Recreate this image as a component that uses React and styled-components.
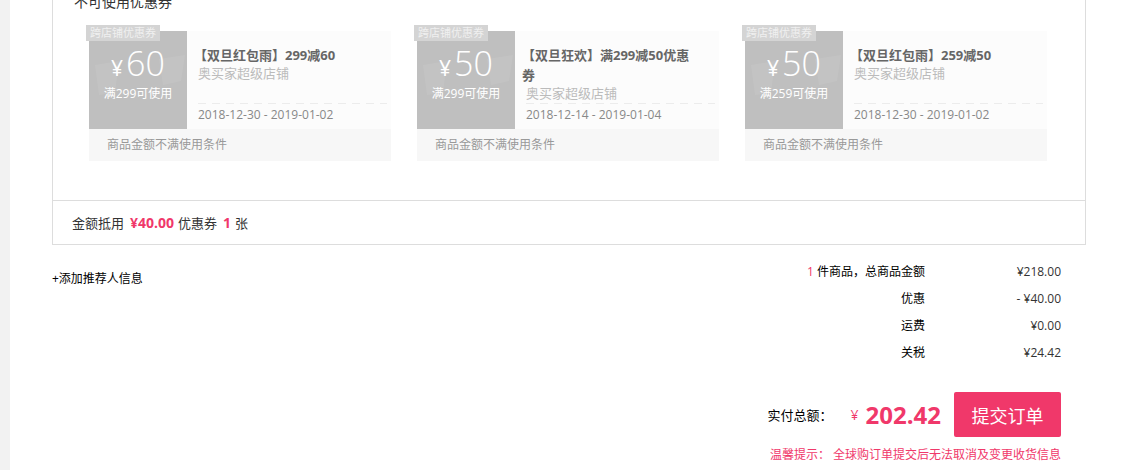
import styled, { createGlobalStyle } from 'styled-components';

const PINK = '#f0386a';

const coupons = [
  { value: '60', limit: '满299可使用', title: '【双旦红包雨】299减60', date: '2018-12-30 - 2019-01-02' },
  { value: '50', limit: '满299可使用', title: '【双旦狂欢】满299减50优惠券', date: '2018-12-14 - 2019-01-04' },
  { value: '50', limit: '满259可使用', title: '【双旦红包雨】259减50', date: '2018-12-30 - 2019-01-02' },
];

const summary = [
  { label: '件商品，总商品金额', count: 1, value: '¥218.00' },
  { label: '优惠', value: '- ¥40.00' },
  { label: '运费', value: '¥0.00' },
  { label: '关税', value: '¥24.42' },
];

const App = () => {
  return (
    <>
      <GlobalStyle />
      <Page>
        <SideStrip />
        <Main>
          <Panel>
            <CouponSection>
              <SectionTitle>不可使用优惠券</SectionTitle>
              <CouponList>
                {coupons.map((c, i) => (
                  <Coupon key={i} {...c} />
                ))}
              </CouponList>
            </CouponSection>
            <AmountRow>
              金额抵用<Strong>¥40.00</Strong>优惠券<Strong>1</Strong>张
            </AmountRow>
          </Panel>
          <Bottom>
            <AddReferrer>+添加推荐人信息</AddReferrer>
            <Summary>
              <SummaryGrid>
                {summary.map((row) => (
                  <SummaryRow key={row.label}>
                    <SummaryLabel>
                      {row.count && <Count>{row.count} </Count>}
                      {row.label}
                    </SummaryLabel>
                    <SummaryValue>{row.value}</SummaryValue>
                  </SummaryRow>
                ))}
              </SummaryGrid>
              <TotalRow>
                <TotalLabel>实付总额：</TotalLabel>
                <Yen>¥</Yen>
                <TotalValue>202.42</TotalValue>
                <SubmitButton>提交订单</SubmitButton>
              </TotalRow>
              <Tip>温馨提示： 全球购订单提交后无法取消及变更收货信息</Tip>
            </Summary>
          </Bottom>
        </Main>
      </Page>
    </>
  );
};

export default App;

function Coupon({ value, limit, title, date }) {
  return (
    <Card>
      <CardBody>
        <Face>
          <Watermark viewBox="0 0 98 98">
            <path d="M6 34 L30 30 L26 62 L10 64 Z" />
            <path d="M70 28 L96 24 L92 50 L74 54 Z" />
          </Watermark>
          <PriceRow>
            <PriceSign>¥</PriceSign>
            <PriceNum>{value}</PriceNum>
          </PriceRow>
          <Limit>{limit}</Limit>
        </Face>
        <Info>
          <CouponTitle>{title}</CouponTitle>
          <Shop>奥买家超级店铺</Shop>
          <DateBlock>{date}</DateBlock>
        </Info>
      </CardBody>
      <CardFooter>商品金额不满使用条件</CardFooter>
      <Tag>跨店铺优惠券</Tag>
    </Card>
  );
}

const GlobalStyle = createGlobalStyle`
  html, body {
    margin: 0;
    padding: 0;
    background: #fff;
  }
  body {
    font-family: "Open Sans", "Noto Sans CJK SC", "Noto Sans", sans-serif;
    overflow: hidden;
  }
  * { box-sizing: border-box; }
`;

const Page = styled.div`
  display: flex;
  height: 470px;
  overflow: hidden;
`;

const SideStrip = styled.div`
  width: 10px;
  flex-shrink: 0;
  background: #f2f2f2;
`;

const Main = styled.div`
  padding-left: 42px;
  width: 1076px;
`;

const Panel = styled.div`
  width: 1034px;
  margin-top: -8px;
  border: 1px solid #ddd;
  border-top: none;
`;

const CouponSection = styled.div`
  padding: 0 0 39px 36px;
`;

const SectionTitle = styled.div`
  margin-left: -15px;
  font-size: 14px;
  line-height: 20px;
  color: #333;
`;

const CouponList = styled.div`
  display: flex;
  gap: 26px;
  margin-top: 19px;
`;

const Card = styled.div`
  position: relative;
  width: 302px;
`;

const CardBody = styled.div`
  display: flex;
  height: 98px;
`;

const Face = styled.div`
  position: relative;
  width: 98px;
  flex-shrink: 0;
  background: #bfbfbf;
  color: #fff;
  display: flex;
  flex-direction: column;
  align-items: center;
  padding-top: 15px;
  overflow: hidden;
`;

const Watermark = styled.svg`
  position: absolute;
  inset: 0;
  width: 98px;
  height: 98px;
  fill: rgba(255, 255, 255, 0.07);
`;

const PriceRow = styled.div`
  position: relative;
  display: flex;
  align-items: baseline;
  height: 34px;
  line-height: 34px;
`;

const PriceSign = styled.span`
  font-size: 21px;
  margin-right: 3px;
`;

const PriceNum = styled.span`
  font-weight: 300;
  font-size: 34px;
`;

const Limit = styled.div`
  position: relative;
  margin-top: 6px;
  font-size: 12px;
  line-height: 16px;
`;

const Info = styled.div`
  flex: 1;
  background: #fcfcfc;
  padding: 14px 20px 0 11px;
  display: flex;
  flex-direction: column;
`;

const CouponTitle = styled.div`
  margin-left: -4px;
  font-size: 13px;
  font-weight: bold;
  line-height: 20px;
  color: #666;
`;

const Shop = styled.div`
  font-size: 13px;
  line-height: 17px;
  color: #bbb;
`;

const DateBlock = styled.div`
  margin: auto -16px 0 0;
  padding: 3px 0 5px;
  font-size: 12px;
  line-height: 18px;
  color: #888;
  background: repeating-linear-gradient(to right, #ececec 0 8px, transparent 8px 14px) top left / 100% 1px no-repeat;
`;

const CardFooter = styled.div`
  height: 32px;
  padding-left: 18px;
  background: #f7f7f7;
  font-size: 12px;
  line-height: 32px;
  color: #999;
`;

const Tag = styled.div`
  position: absolute;
  left: -3px;
  top: -6px;
  height: 16px;
  padding: 0 4px;
  background: #d4d4d4;
  color: #f0f0f0;
  font-size: 11px;
  line-height: 16px;
`;

const AmountRow = styled.div`
  display: flex;
  align-items: center;
  height: 44px;
  padding-left: 19px;
  border-top: 1px solid #ddd;
  font-size: 13px;
  color: #333;
`;

const Strong = styled.b`
  margin: 0 4px 0 6px;
  color: ${PINK};
  font-size: 14px;
`;

const Bottom = styled.div`
  display: flex;
  justify-content: space-between;
  width: 1034px;
  padding-right: 25px;
`;

const AddReferrer = styled.div`
  margin-top: 24px;
  font-size: 12px;
  line-height: 20px;
  color: #000;
`;

const Summary = styled.div`
  display: flex;
  flex-direction: column;
  align-items: flex-end;
`;

const SummaryGrid = styled.div`
  display: grid;
  grid-template-columns: auto 136px;
  margin-top: 13px;
`;

const SummaryRow = styled.div`
  display: contents;
`;

const SummaryLabel = styled.div`
  text-align: right;
  font-size: 12px;
  line-height: 27px;
  color: #000;
`;

const Count = styled.span`
  color: ${PINK};
`;

const SummaryValue = styled.div`
  text-align: right;
  font-size: 12px;
  line-height: 27px;
  color: #333;
`;

const TotalRow = styled.div`
  display: flex;
  align-items: center;
  margin-top: 26px;
  height: 45px;
`;

const TotalLabel = styled.span`
  font-size: 13px;
  color: #000;
`;

const Yen = styled.span`
  margin-left: 18px;
  font-size: 14px;
  color: ${PINK};
`;

const TotalValue = styled.span`
  margin-left: 7px;
  font-size: 24px;
  font-weight: bold;
  color: ${PINK};
`;

const SubmitButton = styled.button`
  margin-left: 13px;
  width: 107px;
  height: 45px;
  border: none;
  border-radius: 2px;
  background: ${PINK};
  color: #fff;
  font-family: inherit;
  font-size: 18px;
  cursor: pointer;
`;

const Tip = styled.div`
  margin-top: 10px;
  font-size: 12px;
  line-height: 16px;
  color: ${PINK};
  white-space: pre;
`;
